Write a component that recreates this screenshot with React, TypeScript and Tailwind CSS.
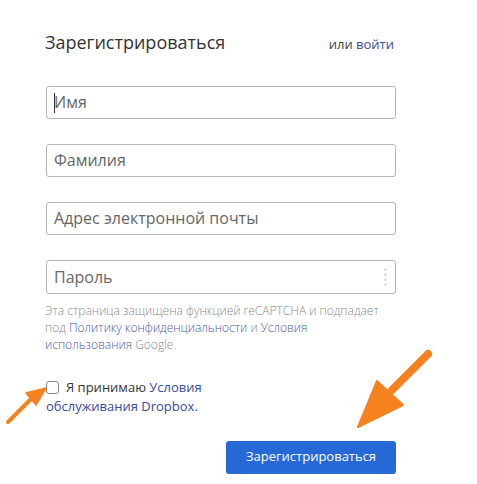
import React from "react";

export default function App() {
  const font = { fontFamily: '"Open Sans", "Noto Sans", sans-serif' };
  return (
    <div className="relative w-[477px] h-[484px] bg-white overflow-hidden" style={font}>
      <div className="ml-[46px] w-[350px] pt-[30px] flex flex-col">
        <div className="flex items-baseline justify-between">
          <h1 className="text-[18px] leading-[24px] text-[#333] -ml-[1px]">Зарегистрироваться</h1>
          <div className="text-[13px] text-[#444] mr-[2px]">
            или <span className="text-[#3a4a9c]">войти</span>
          </div>
        </div>
        <div className="mt-[31px] flex flex-col gap-[25px]">
          <div className="relative h-[33px] rounded-[3px] border border-[#b5b5b5] flex items-center px-[7px]">
            <span className="absolute left-[7px] top-[6px] w-[1px] h-[20px] bg-[#333]" />
            <span className="text-[16px] text-[#666]">Имя</span>
          </div>
          <div className="h-[33px] rounded-[3px] border border-[#b5b5b5] flex items-center px-[7px]">
            <span className="text-[16px] text-[#666]">Фамилия</span>
          </div>
          <div className="h-[33px] rounded-[3px] border border-[#b5b5b5] flex items-center px-[7px]">
            <span className="text-[16px] text-[#666]">Адрес электронной почты</span>
          </div>
          <div className="h-[34px] rounded-[3px] border border-[#b5b5b5] flex items-center px-[7px] justify-between">
            <span className="text-[16px] text-[#666]">Пароль</span>
            <div className="flex flex-col gap-[2px] mr-[1px]">
              <span className="w-[3px] h-[3px] rounded-full bg-[#d3e0ea]" />
              <span className="w-[3px] h-[3px] rounded-full bg-[#d3e0ea]" />
              <span className="w-[3px] h-[3px] rounded-full bg-[#d3e0ea]" />
              <span className="w-[3px] h-[3px] rounded-full bg-[#d3e0ea]" />
            </div>
          </div>
        </div>
        <p className="mt-[8px] -ml-[1px] text-[12px] leading-[17px] text-[#8a8a8a] font-light w-[370px] whitespace-nowrap">
          Эта страница защищена функцией reCAPTCHA и подпадает
          <br />
          под <span className="text-[#4a5aa8]">Политику конфиденциальности</span> и{" "}
          <span className="text-[#4a5aa8]">Условия</span>
          <br />
          <span className="text-[#4a5aa8]">использования</span> Google.
        </p>
        <div className="mt-[25px] text-[13px] leading-[19px] text-[#333] w-[190px]">
          <span className="inline-block align-[-2px] w-[13px] h-[13px] rounded-[3px] border border-[#888] bg-white mr-[7px]" />
          Я принимаю <span className="text-[#3a4a9c]">Условия</span>
          <br />
          <span className="text-[#3a4a9c]">обслуживания Dropbox.</span>
        </div>
        <div className="mt-[25px] flex justify-end">
          <button className="w-[170px] h-[33px] rounded-[3px] bg-[#2768d7] text-white text-[13px] flex items-center justify-center">
            Зарегистрироваться
          </button>
        </div>
      </div>
      <svg className="absolute left-0 top-0" width="477" height="484" viewBox="0 0 477 484">
        <g fill="#f5821f" stroke="#f5821f" strokeLinejoin="round">
          <line x1="428" y1="354" x2="392" y2="390" strokeWidth="8" strokeLinecap="round" />
          <polygon points="377,381 403,405 358,427" strokeWidth="2" />
          <line x1="8" y1="422" x2="32" y2="398" strokeWidth="4" strokeLinecap="round" />
          <polygon points="26,393 36,405 46,388" strokeWidth="1.5" />
        </g>
      </svg>
    </div>
  );
}
